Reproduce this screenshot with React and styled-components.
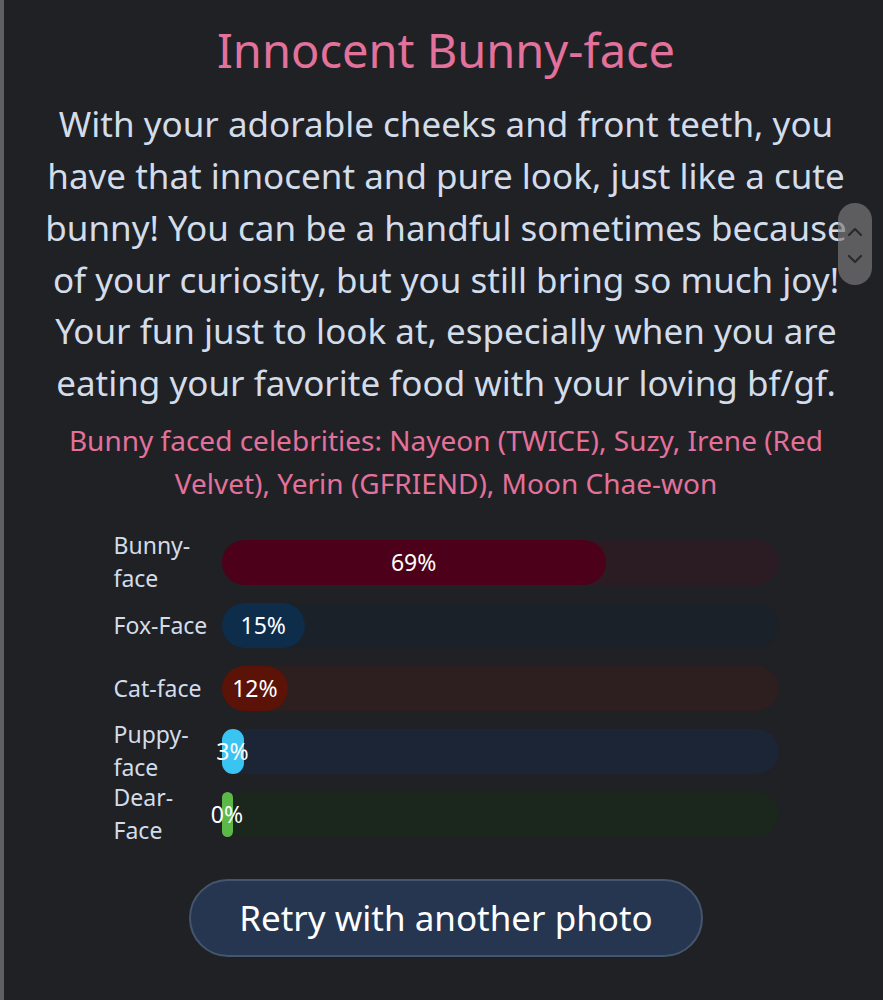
import React from "react";
import styled, { createGlobalStyle } from "styled-components";

const Global = createGlobalStyle`
  html, body { margin: 0; padding: 0; background: #202124; }
  body { font-family: "Noto Sans", "Open Sans", sans-serif; }
`;

const Page = styled.div`
  position: relative;
  min-height: 1000px;
  box-sizing: border-box;
  border-left: 4px solid #5f6064;
  padding: 19px 0 40px 5px;
  display: flex;
  flex-direction: column;
  align-items: center;
  color: #d2dcea;
`;

const Title = styled.h1`
  margin: 0;
  font-size: 47px;
  font-weight: 400;
  line-height: 1.35;
  color: #e2719b;
  text-align: center;
`;

const Description = styled.p`
  margin: 16px 0 0;
  width: 810px;
  font-size: 35px;
  line-height: 51.7px;
  text-align: center;
  color: #d2dcea;
`;

const Celebs = styled.p`
  margin: 10px 0 0;
  width: 780px;
  font-size: 28px;
  line-height: 43px;
  text-align: center;
  color: #e2719b;
`;

const Chart = styled.div`
  margin-top: 35px;
  width: 665px;
  display: flex;
  flex-direction: column;
  gap: 18px;
`;

const Row = styled.div`
  height: 45px;
  display: flex;
  align-items: center;
  gap: 8px;
`;

const Label = styled.div`
  width: 100px;
  flex: none;
  font-size: 23px;
  line-height: 33px;
  color: #d2dcea;
`;

const Track = styled.div`
  flex: 1;
  height: 45px;
  border-radius: 23px;
  background: ${(p) => p.$track};
  display: flex;
`;

const Fill = styled.div`
  height: 100%;
  border-radius: 23px;
  background: ${(p) => p.$fill};
  display: flex;
  align-items: center;
  justify-content: center;
  font-size: 23px;
  color: #ffffff;
  white-space: nowrap;
`;

const Button = styled.button`
  margin-top: 42px;
  width: 514px;
  height: 78px;
  box-sizing: border-box;
  border-radius: 39px;
  border: 2px solid #45556d;
  background: #263650;
  color: #ffffff;
  font-family: "Noto Sans", "Open Sans", sans-serif;
  font-size: 35px;
  cursor: pointer;
`;

const ScrollNav = styled.div`
  position: absolute;
  left: 834px;
  top: 203px;
  width: 34px;
  height: 82px;
  border-radius: 17px;
  background: rgba(122, 122, 124, 0.68);
  display: flex;
  flex-direction: column;
  align-items: center;
  justify-content: center;
  gap: 17px;
  padding-top: 2px;
  box-sizing: border-box;
`;

const Chevron = ({ up }) => (
  <svg width="16" height="10" viewBox="0 0 16 10" fill="none">
    <path
      d={up ? "M2 8 L8 2 L14 8" : "M2 2 L8 8 L14 2"}
      stroke="#2a2a2d"
      strokeWidth="2.2"
      strokeLinecap="round"
      strokeLinejoin="round"
    />
  </svg>
);

const data = [
  { label: "Bunny-face", pct: 69, fill: "#4c0019", track: "#2b1b22" },
  { label: "Fox-Face", pct: 15, fill: "#0e2d4a", track: "#1b2129" },
  { label: "Cat-face", pct: 12, fill: "#5b1207", track: "#2d1e1f" },
  { label: "Puppy-face", pct: 3, fill: "#3ac4f2", track: "#1b2535" },
  { label: "Dear-Face", pct: 0, fill: "#5cb948", track: "#1b261d" },
];

export default function App() {
  return (
    <>
      <Global />
      <Page>
        <Title>Innocent Bunny-face</Title>
        <Description>
          With your adorable cheeks and front teeth, you have that innocent and
          pure look, just like a cute bunny! You can be a handful sometimes
          because of your curiosity, but you still bring so much joy! Your fun
          just to look at, especially when you are eating your favorite food
          with your loving bf/gf.
        </Description>
        <Celebs>
          Bunny faced celebrities: Nayeon (TWICE), Suzy, Irene (Red Velvet),
          Yerin (GFRIEND), Moon Chae-won
        </Celebs>
        <Chart>
          {data.map((d) => (
            <Row key={d.label}>
              <Label>{d.label}</Label>
              <Track $track={d.track}>
                <Fill
                  $fill={d.fill}
                  style={{
                    width: d.pct === 0 ? "11px" : `max(${d.pct}%, 22px)`,
                  }}
                >
                  {d.pct}%
                </Fill>
              </Track>
            </Row>
          ))}
        </Chart>
        <Button>Retry with another photo</Button>
        <ScrollNav>
          <Chevron up />
          <Chevron />
        </ScrollNav>
      </Page>
    </>
  );
}
